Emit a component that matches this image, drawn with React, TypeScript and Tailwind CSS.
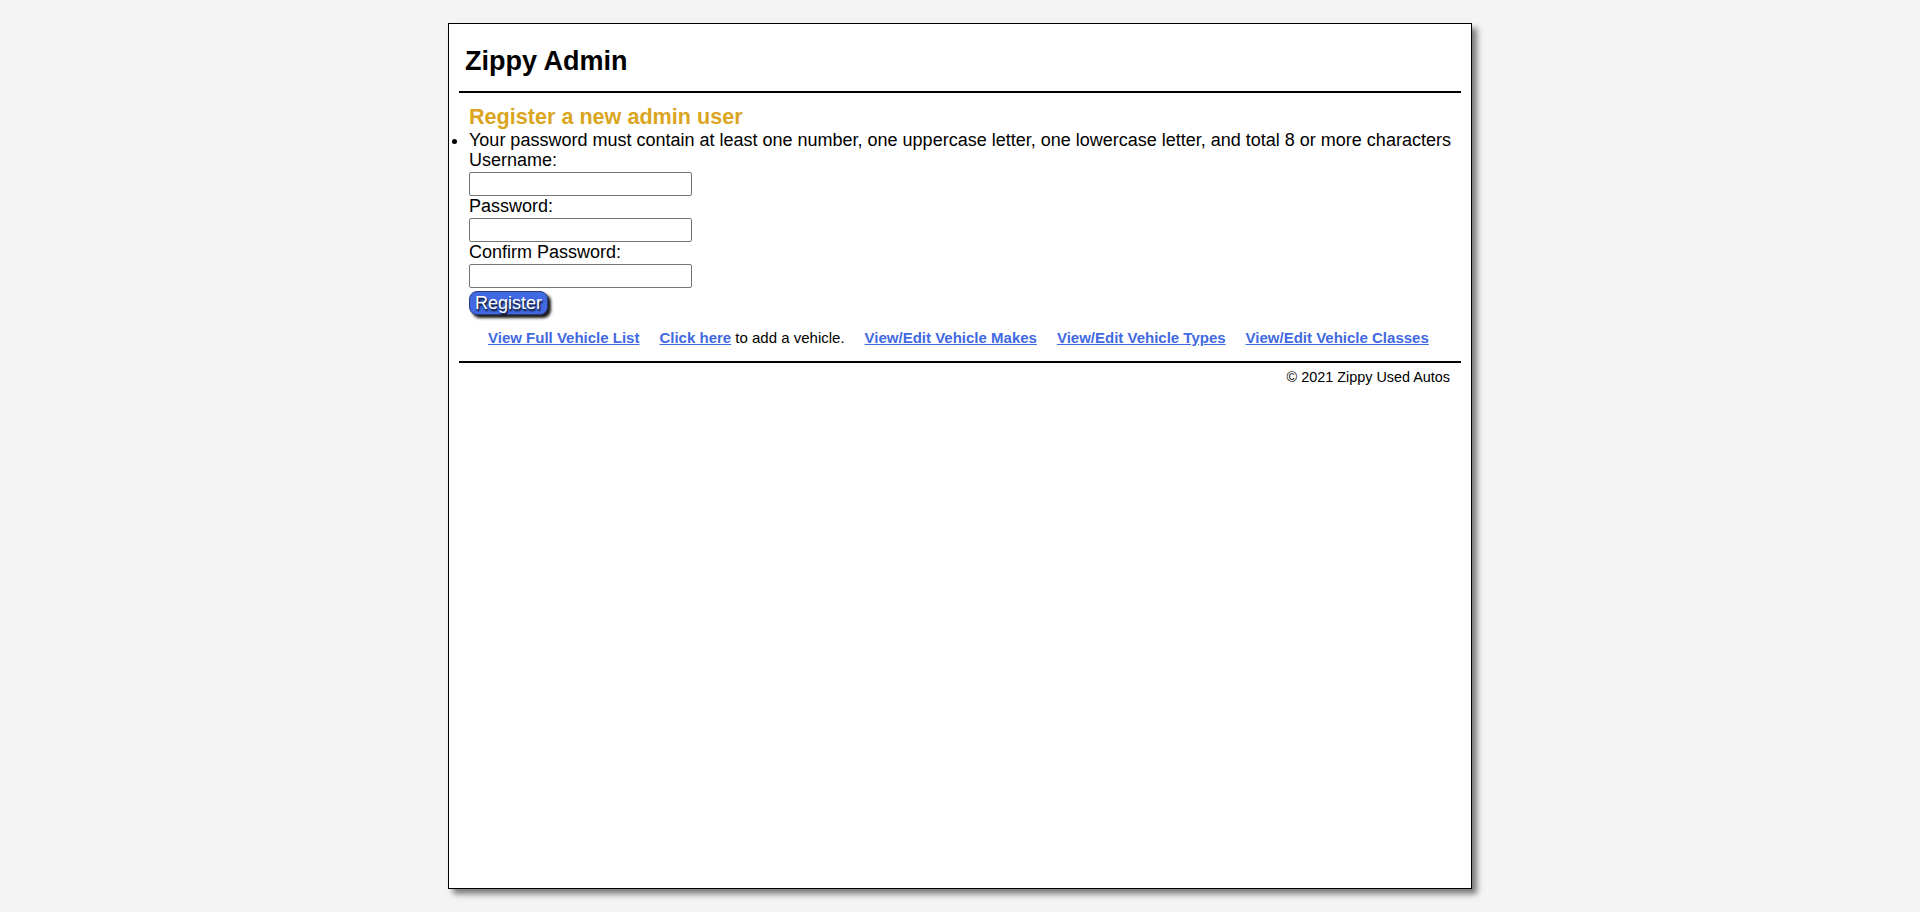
import React from 'react';

const links = [
  { label: 'View Full Vehicle List' },
  { label: 'Click here', after: ' to add a vehicle.' },
  { label: 'View/Edit Vehicle Makes' },
  { label: 'View/Edit Vehicle Types' },
  { label: 'View/Edit Vehicle Classes' },
];

const fields = ['Username:', 'Password:', 'Confirm Password:'];

export default function App() {
  return (
    <div className="min-h-[912px] bg-[#f4f4f4] pt-[23px] font-['Liberation_Sans',Arial,sans-serif] text-[18px] text-black">
      <div className="mx-auto h-[866px] w-[1024px] border border-black bg-white px-[10px] shadow-[5px_5px_6px_#7a7a7a]">
        {/* Header */}
        <header className="pt-[22px] pb-[14px] pl-[6px]">
          <h1 className="text-[27px] font-bold leading-[31px]">Zippy Admin</h1>
        </header>
        <div className="h-[2px] bg-black" />

        {/* Main */}
        <main className="pl-[10px]">
          <h2 className="mt-[11px] text-[21.6px] font-bold leading-[25px] text-[#daa520]">
            Register a new admin user
          </h2>
          <ul className="mt-[1px] list-outside list-disc leading-[20px]">
            <li>
              Your password must contain at least one number, one uppercase letter, one lowercase
              letter, and total 8 or more characters
            </li>
          </ul>
          <form className="flex flex-col" onSubmit={(e) => e.preventDefault()}>
            {fields.map((f) => (
              <label key={f} className="flex flex-col">
                <span className="leading-[20px]">{f}</span>
                <input
                  type={f === 'Username:' ? 'text' : 'password'}
                  className="mt-[2px] h-[24px] w-[223px] rounded-[2px] border border-[#767676] bg-white px-1 text-[13px] outline-none"
                />
              </label>
            ))}
            <div className="mt-[2px]">
              <button
                type="submit"
                className="h-[24px] rounded-[8px] border border-[#2a3a80] bg-[#4169e1] px-[5px] text-[18px] leading-[20px] text-white shadow-[3px_3px_3px_#1a1a1a] [text-shadow:1px_2px_2px_#000]"
              >
                Register
              </button>
            </div>
          </form>

          {/* Nav links */}
          <nav className="mt-[12px] flex gap-[20px] pl-[19px] text-[15px] leading-[17px]">
            {links.map((l) => (
              <span key={l.label}>
                <a href="#" className="font-bold text-[#4169e1] underline">
                  {l.label}
                </a>
                {l.after}
              </span>
            ))}
          </nav>
        </main>

        <div className="mt-[15px] h-[2px] bg-black" />

        {/* Footer */}
        <footer className="mt-[6px] pr-[11px] text-right text-[14.4px] leading-[16px]">
          © 2021 Zippy Used Autos
        </footer>
      </div>
    </div>
  );
}
